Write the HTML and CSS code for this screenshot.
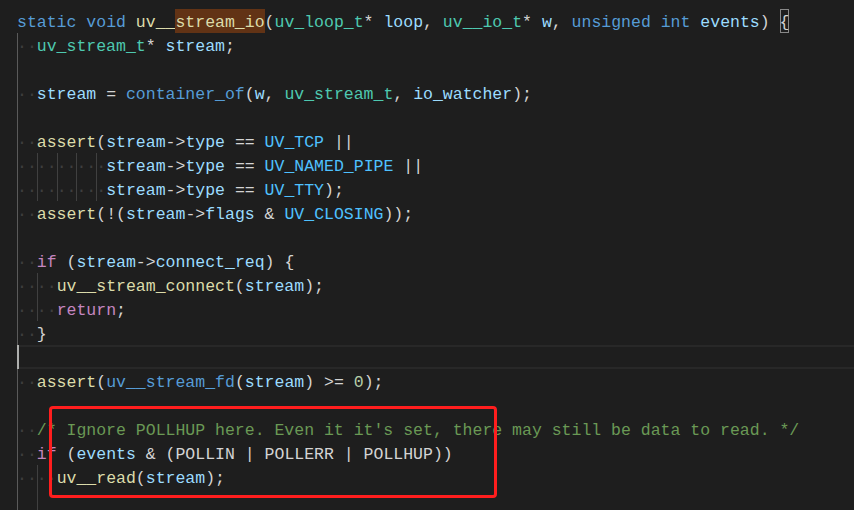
FILE: index.html
```html
<!DOCTYPE html>
<html lang="en">
<head>
  <meta charset="UTF-8" />
  <meta name="viewport" content="width=device-width, initial-scale=1.0"/>
  <title>stream.c</title>
  <link rel="stylesheet" href="styles.css">
</head>
<body>

  <div class="editor">
    <!-- function header -->
    <div class="line"><span class="kw">static</span> <span class="kw">void</span> <span class="fn">uv__<span class="hl">stream_io</span></span>(<span class="ty">uv_loop_t</span>* <span class="va">loop</span>, <span class="ty">uv__io_t</span>* <span class="va">w</span>, <span class="kw">unsigned</span> <span class="kw">int</span> <span class="va">events</span>) <span class="match">{</span></div>

    <!-- function body, col 0 guide drawn on the wrapper -->
    <div class="body">
      <div class="line"><span class="ws">··</span><span class="ty">uv_stream_t</span>* <span class="va">stream</span>;</div>
      <div class="line"></div>
      <div class="line"><span class="ws">··</span><span class="va">stream</span> = <span class="kw">container_of</span>(<span class="va">w</span>, <span class="ty">uv_stream_t</span>, <span class="va">io_watcher</span>);</div>
      <div class="line"></div>
      <div class="line"><span class="ws">··</span><span class="fn">assert</span>(<span class="va">stream</span>-&gt;<span class="va">type</span> == <span class="en">UV_TCP</span> ||</div>
      <div class="line"><span class="ws">··</span><span class="ig ws">··</span><span class="ig ws">··</span><span class="ig ws">··</span><span class="ig ws">·</span><span class="va">stream</span>-&gt;<span class="va">type</span> == <span class="en">UV_NAMED_PIPE</span> ||</div>
      <div class="line"><span class="ws">··</span><span class="ig ws">··</span><span class="ig ws">··</span><span class="ig ws">··</span><span class="ig ws">·</span><span class="va">stream</span>-&gt;<span class="va">type</span> == <span class="en">UV_TTY</span>);</div>
      <div class="line"><span class="ws">··</span><span class="fn">assert</span>(!(<span class="va">stream</span>-&gt;<span class="va">flags</span> &amp; <span class="en">UV_CLOSING</span>));</div>
      <div class="line"></div>
      <div class="line"><span class="ws">··</span><span class="ct">if</span> (<span class="va">stream</span>-&gt;<span class="va">connect_req</span>) {</div>
      <div class="line"><span class="ws">··</span><span class="ig ws">··</span><span class="fn">uv__stream_connect</span>(<span class="va">stream</span>);</div>
      <div class="line"><span class="ws">··</span><span class="ig ws">··</span><span class="ct">return</span>;</div>
      <div class="line"><span class="ws">··</span>}</div>
      <div class="line current"></div>
      <div class="line"><span class="ws">··</span><span class="fn">assert</span>(<span class="kw">uv__stream_fd</span>(<span class="va">stream</span>) &gt;= <span class="nu">0</span>);</div>
      <div class="line"></div>
      <div class="line"><span class="ws">··</span><span class="cm">/* Ignore POLLHUP here. Even it it's set, there may still be data to read. */</span></div>
      <div class="line"><span class="ws">··</span><span class="ct">if</span> (<span class="va">events</span> &amp; (POLLIN | POLLERR | POLLHUP))</div>
      <div class="line"><span class="ws">··</span><span class="ig ws">··</span><span class="fn">uv__read</span>(<span class="va">stream</span>);</div>
      <div class="line">  <span class="ig">  </span></div>
    </div>

    <!-- annotation drawn over the code -->
    <div class="note"></div>
  </div>

</body>
</html>
```

FILE: styles.css
```css
body {
  margin: 0;
  background-color: #1e1e1e;
}
.editor {
  position: relative;
  width: 854px;
  height: 510px;
  overflow: hidden;
  box-sizing: border-box;
  padding: 9px 0 0 17px;
  background-color: #1e1e1e;
  color: #d4d4d4;
  font-family: "Liberation Mono", "DejaVu Sans Mono", monospace;
  font-size: 16.5px;
}
.line {
  height: 24px;
  line-height: 27px;
  white-space: pre;
}
.body {
  box-shadow: inset 1px 0 0 #5a5a5a;
}
.ws {
  color: #3e3e3e;
}
.ig {
  display: inline-block;
  height: 24px;
  vertical-align: top;
  box-shadow: inset 1px 0 0 #404040;
}
.hl {
  display: inline-block;
  height: 24px;
  vertical-align: top;
  background-color: #623315;
}
.match {
  display: inline-block;
  height: 24px;
  vertical-align: top;
  box-shadow: inset 0 0 0 1px #888888;
}
.current {
  position: relative;
  box-shadow: inset 0 2px 0 #282828, inset 0 -2px 0 #282828;
}
.current::before {
  content: "";
  position: absolute;
  left: 0;
  top: 0;
  width: 2px;
  height: 24px;
  background-color: #aeafad;
}
.kw { color: #569cd6; }
.fn { color: #dcdcaa; }
.ty { color: #4ec9b0; }
.va { color: #9cdcfe; }
.en { color: #4fc1ff; }
.ct { color: #c586c0; }
.nu { color: #b5cea8; }
.cm { color: #6a9955; }
.note {
  position: absolute;
  left: 49px;
  top: 406px;
  width: 448px;
  height: 92px;
  box-sizing: border-box;
  border: 3px solid #ff1e1e;
  border-radius: 4px;
}
```
